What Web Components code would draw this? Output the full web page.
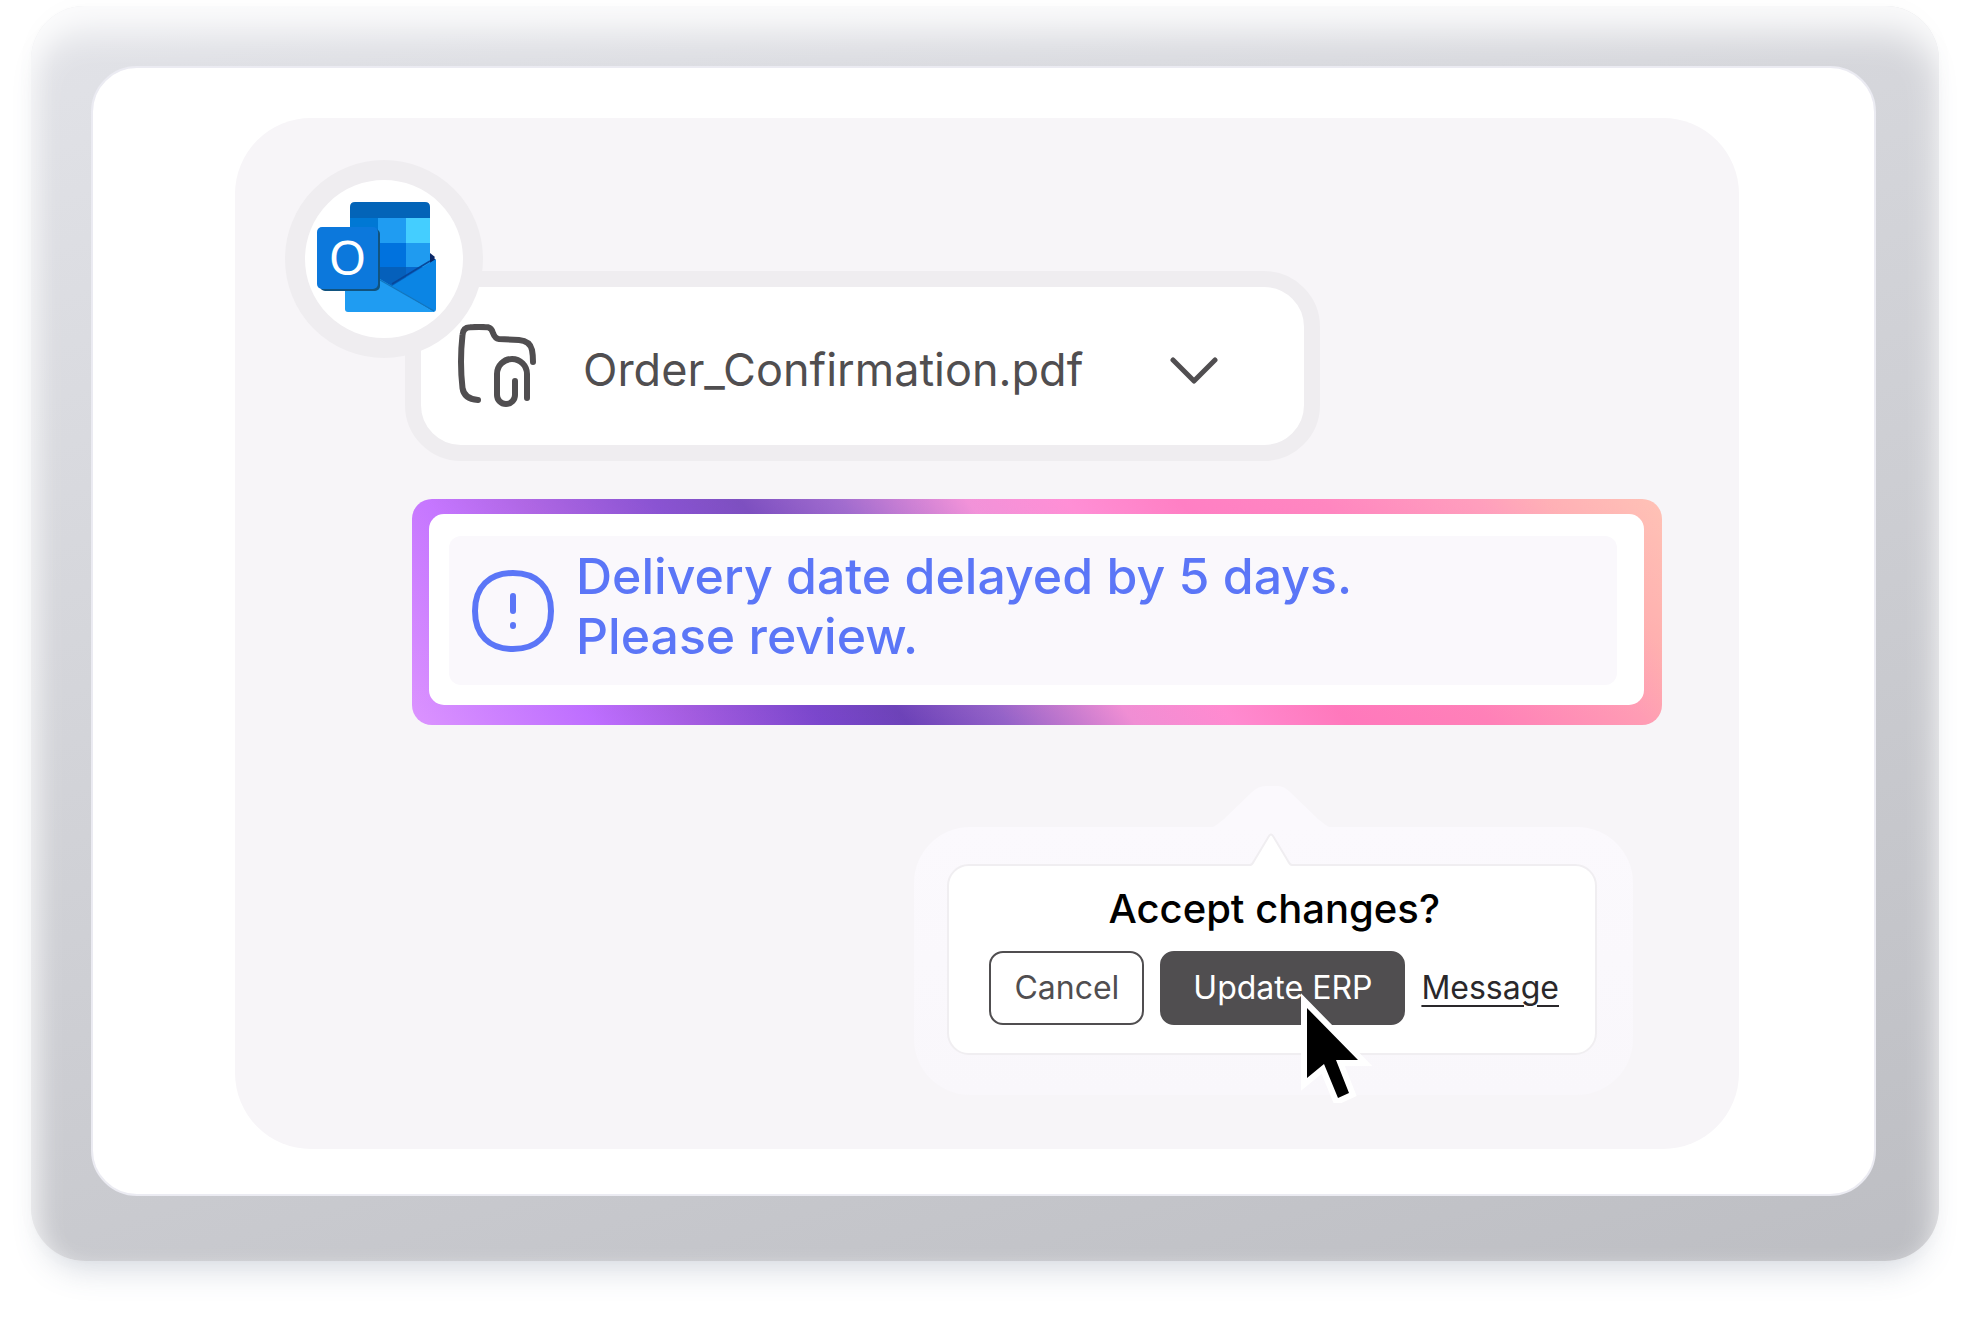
<!DOCTYPE html>
<html lang="en">
<head>
<meta charset="utf-8">
<meta name="viewport" content="width=device-width, initial-scale=1">
<title>Order confirmation</title>
<style>
  body {
    margin: 0;
    background: #ffffff;
    font-family: Inter, 'Liberation Sans', sans-serif;
    color: #504e50;
  }
</style>
</head>
<body>
<device-frame>
  <order-panel>
    <mail-badge slot="badge"></mail-badge>
    <file-picker file="Order_Confirmation.pdf"></file-picker>
    <alert-banner>Delivery date delayed by 5 days.<br>Please review.</alert-banner>
    <confirm-popover>
      <span slot="title">Accept changes?</span>
      <action-button>Cancel</action-button>
      <action-button variant="solid" pointed>Update ERP</action-button>
      <message-link href="#message">Message</message-link>
    </confirm-popover>
  </order-panel>
</device-frame>

<script>
class DeviceFrame extends HTMLElement {
  constructor() {
    super();
    this.attachShadow({ mode: 'open' });
    this.shadowRoot.innerHTML = `
      <style>
        :host {
          display: block;
          box-sizing: border-box;
          margin: 6px 32px 56px 31px;
          padding: 60px 63px 65px 60px;
          border-radius: 54px;
          background: linear-gradient(163deg, #e2e3e8 0%, #bdbec3 100%);
          box-shadow:
            inset 0 28px 34px rgba(255, 255, 255, 0.8),
            inset 6px 6px 22px rgba(255, 255, 255, 0.4),
            0 22px 32px -14px rgba(70, 85, 120, 0.22),
            0 0 24px rgba(70, 85, 120, 0.02);
        }

        .screen {
          padding: 50px 135px 45px 142px;
          border: 2px solid #ebebf2;
          border-radius: 46px;
          background: #ffffff;
        }
      </style>
      <div class="screen"><slot></slot></div>
    `;
  }
}

class OrderPanel extends HTMLElement {
  constructor() {
    super();
    this.attachShadow({ mode: 'open' });
    this.shadowRoot.innerHTML = `
      <style>
        :host {
          display: block;
          position: relative;
          padding: 153px 77px 94px 170px;
          border-radius: 76px;
          background: #f7f5f8;
        }

        .stack {
          display: flex;
          flex-direction: column;
          align-items: flex-start;
        }

        /* the badge overlaps the corner of the file card */
        .badge {
          position: absolute;
          left: 50px;
          top: 42px;
          z-index: 1;
        }
      </style>
      <div class="badge"><slot name="badge"></slot></div>
      <div class="stack"><slot></slot></div>
    `;
  }
}

class MailBadge extends HTMLElement {
  constructor() {
    super();
    this.attachShadow({ mode: 'open' });
    this.shadowRoot.innerHTML = `
      <style>
        :host {
          display: flex;
          align-items: center;
          justify-content: center;
          width: 158px;
          height: 158px;
          border: 20px solid #efedf0;
          border-radius: 50%;
          background: #ffffff;
        }

        .logo {
          position: relative;
          width: 120px;
          height: 110px;
          margin: 0 14px 4px 0;
        }

        svg {
          display: block;
        }

        .letter {
          position: absolute;
          left: 0;
          top: 24px;
          width: 61px;
          height: 61px;
          color: #ffffff;
          font: 400 48px/61px 'Noto Sans', 'Open Sans', sans-serif;
          text-align: center;
        }
      </style>
      <div class="logo" role="img" aria-label="Outlook">
        <svg width="120" height="110" viewBox="0 0 120 110">
          <path d="M108 51l8 4q3 2 3 6l-11 12z" fill="#0a2767"/>
          <path d="M33 5q0-5 5-5h70q5 0 5 5v68L76 92 33 82z" fill="#0364b8"/>
          <path d="M33 16h28v25H33z" fill="#0078d4"/>
          <path d="M61 16h28v25H61z" fill="#1f9cf2"/>
          <path d="M89 16h24v25H89z" fill="#44ceff"/>
          <path d="M61 41h28v24H61z" fill="#0072de"/>
          <path d="M89 41h24v24H89z" fill="#1f9bf0"/>
          <path d="M61 65h28v18H61z" fill="#0560bb"/>
          <path d="M89 65h24v7L89 84z" fill="#0868cc"/>
          <path d="M113 51l5 4-5 6z" fill="#0a2767"/>
          <path d="M63 77l12 7 44-27v50q0 3-3 3z" fill="#0b85e4"/>
          <path d="M75 82L113 59" stroke="#08479a" stroke-width="1.5"/>
          <path d="M28 66l35 11 54 33H31q-3 0-3-3z" fill="#1f9cf2"/>
          <path d="M63 78l54 31" stroke="#1275bd" stroke-width="1.2"/>
          <rect x="3" y="27" width="60" height="62" rx="5" fill="#11537f"/>
          <rect x="0" y="25" width="61" height="62" rx="5" fill="#0c78dc"/>
        </svg>
        <div class="letter">O</div>
      </div>
    `;
  }
}

class FilePicker extends HTMLElement {
  constructor() {
    super();
    this.attachShadow({ mode: 'open' });
  }

  connectedCallback() {
    const file = this.getAttribute('file');
    this.shadowRoot.innerHTML = `
      <style>
        :host {
          display: flex;
          align-items: center;
          gap: 47px;
          box-sizing: border-box;
          min-height: 190px;
          padding: 0 86px 0 37px;
          border: 16px solid #efedf0;
          border-radius: 56px;
          background: #ffffff;
        }

        .folder {
          flex: none;
        }

        .field {
          display: grid;
          align-items: center;
          padding-top: 8px;
        }

        .field > * {
          grid-area: 1 / 1;
        }

        select {
          appearance: none;
          margin: 0;
          padding: 0 134px 0 0;
          border: 0;
          background: none;
          color: #504e50;
          font: 400 45px/60px Inter, 'Liberation Sans', sans-serif;
        }

        .chevron {
          justify-self: end;
          pointer-events: none;
        }
      </style>
      <svg class="folder" width="78" height="84" viewBox="0 0 78 84" fill="none" stroke="#504e50" stroke-width="6" stroke-linecap="round" stroke-linejoin="round" aria-hidden="true">
        <path d="M20 76Q6 75 4.500 64Q1.500 38 4.500 11Q5 3.500 12 3.300Q21 2.500 30 3.300Q33.500 4 35 9Q37 14.500 41 15L61 16Q72 17 74 26Q75 31 75 38"/>
        <path d="M69 74V50a15 15 0 0 0-30 0v21a9 9 0 0 0 18 0V57"/>
      </svg>
      <div class="field">
        <select aria-label="Attached file">
          <option>${file}</option>
        </select>
        <svg class="chevron" width="50" height="30" viewBox="0 0 50 30" fill="none" stroke="#504e50" stroke-width="5" stroke-linecap="round" stroke-linejoin="round" aria-hidden="true">
          <path d="M5 5l21 21L47 5"/>
        </svg>
      </div>
    `;
  }
}

class AlertBanner extends HTMLElement {
  constructor() {
    super();
    this.attachShadow({ mode: 'open' });
    this.shadowRoot.innerHTML = `
      <style>
        :host {
          display: block;
          align-self: stretch;
          margin: 38px 0 0 7px;
          padding: 15px 18px 20px 17px;
          border-radius: 20px;
          background:
            linear-gradient(rgba(255, 180, 255, 0.12), transparent),
            linear-gradient(53deg,
              #dc94ff 0%,
              #be6eff 13%,
              #a45ce0 20%,
              #7a46cc 29%,
              #6c42b8 35%,
              #9462c8 42%,
              #f08ed4 51%,
              #ff8ad0 58%,
              #ff78bc 66%,
              #ff80b8 76%,
              #ff9cb4 87%,
              #ffb0ac 92%,
              #ffc4ac 100%);
        }

        .card {
          padding: 22px 27px 20px 20px;
          border-radius: 15px;
          background: #ffffff;
        }

        .message {
          display: flex;
          align-items: center;
          gap: 22px;
          padding: 10px 24px 19px 23px;
          border-radius: 12px;
          background: #faf8fc;
          color: #5b76f7;
        }

        svg {
          flex: none;
          margin-top: 10px;
        }

        p {
          margin: 0;
          font-size: 50px;
          line-height: 60px;
          font-weight: 500;
        }
      </style>
      <div class="card">
        <div class="message" role="alert">
          <svg width="82" height="82" viewBox="0 0 82 82" fill="none" stroke="currentColor" stroke-width="6" stroke-linecap="round" aria-hidden="true">
            <path d="M41 3C65 3 79 17 79 41S65 79 41 79 3 65 3 41 17 3 41 3z"/>
            <path d="M41 26v15M41 55v1"/>
          </svg>
          <p><slot></slot></p>
        </div>
      </div>
    `;
  }
}

class ConfirmPopover extends HTMLElement {
  constructor() {
    super();
    this.attachShadow({ mode: 'open' });
    this.shadowRoot.innerHTML = `
      <style>
        :host {
          display: block;
          position: relative;
          align-self: flex-end;
          margin: 139px 65px 0 0;
        }

        /* pale halo behind the bubble */
        .halo {
          position: absolute;
          inset: -37px -36px -40px -33px;
          border-radius: 56px;
          background: linear-gradient(#fbf9fd, #f9f7fb);
        }

        .halo-tip {
          position: absolute;
          left: 50%;
          top: -78px;
          margin-left: -64px;
        }

        .bubble {
          position: relative;
          padding: 16px 36px 28px 40px;
          border: 2px solid #f0eef1;
          border-radius: 22px;
          background: #ffffff;
        }

        .tip {
          position: absolute;
          left: 50%;
          top: -34px;
          margin-left: -24px;
        }

        h2 {
          margin: 0 0 15px;
          color: #000000;
          font-size: 40px;
          line-height: 54px;
          font-weight: 500;
          text-align: center;
        }

        .actions {
          display: flex;
          align-items: center;
          gap: 16px;
        }
      </style>
      <div class="halo"></div>
      <svg class="halo-tip" width="126" height="44" viewBox="0 0 126 44" aria-hidden="true">
        <path d="M0 44Q8 40 16 33L44 6Q50 0 58 0h12q6 0 12 6l28 27q8 7 16 11z" fill="#fbf9fd"/>
      </svg>
      <div class="bubble">
        <svg class="tip" width="48" height="34" viewBox="0 0 48 34" aria-hidden="true">
          <path d="M3 34L21 4q2-3 4 0l19 30z" fill="#ffffff"/>
          <path d="M2 33q2 0 4-4L21 4q2-3 4 0l15 25q2 4 4 4" fill="none" stroke="#f0eef1" stroke-width="2"/>
        </svg>
        <h2><slot name="title"></slot></h2>
        <div class="actions"><slot></slot></div>
      </div>
    `;
  }
}

class ActionButton extends HTMLElement {
  constructor() {
    super();
    this.attachShadow({ mode: 'open' });
  }

  connectedCallback() {
    const cursor = `
      <svg class="cursor" width="74" height="116" viewBox="0 0 74 116" aria-hidden="true">
        <path d="M9 21v70l17-14 14 34 11-5-13-33h22z" fill="#000000" stroke="#ffffff" stroke-width="12" paint-order="stroke"/>
      </svg>`;

    this.shadowRoot.innerHTML = `
      <style>
        :host {
          display: block;
          position: relative;
        }

        button {
          display: block;
          height: 74px;
          margin: 0;
          padding: 0 23px;
          border: 2px solid #504e50;
          border-radius: 14px;
          background: #ffffff;
          color: #504e50;
          font: 400 32px/40px Inter, 'Liberation Sans', sans-serif;
        }

        :host([variant="solid"]) button {
          padding: 0 31px;
          background: #504e50;
          color: #ffffff;
        }

        .cursor {
          position: absolute;
          left: 138px;
          top: 36px;
          pointer-events: none;
        }
      </style>
      <button type="button"><slot></slot></button>
      ${this.hasAttribute('pointed') ? cursor : ''}
    `;
  }
}

class MessageLink extends HTMLElement {
  constructor() {
    super();
    this.attachShadow({ mode: 'open' });
  }

  connectedCallback() {
    this.shadowRoot.innerHTML = `
      <style>
        :host {
          display: block;
        }

        a {
          color: #2a282b;
          font-size: 32px;
          line-height: 40px;
          text-decoration: underline;
          text-decoration-thickness: 2px;
          text-underline-offset: 6px;
        }
      </style>
      <a href="${this.getAttribute('href')}"><slot></slot></a>
    `;
  }
}

customElements.define('device-frame', DeviceFrame);
customElements.define('order-panel', OrderPanel);
customElements.define('mail-badge', MailBadge);
customElements.define('file-picker', FilePicker);
customElements.define('alert-banner', AlertBanner);
customElements.define('confirm-popover', ConfirmPopover);
customElements.define('action-button', ActionButton);
customElements.define('message-link', MessageLink);
</script>
</body>
</html>
